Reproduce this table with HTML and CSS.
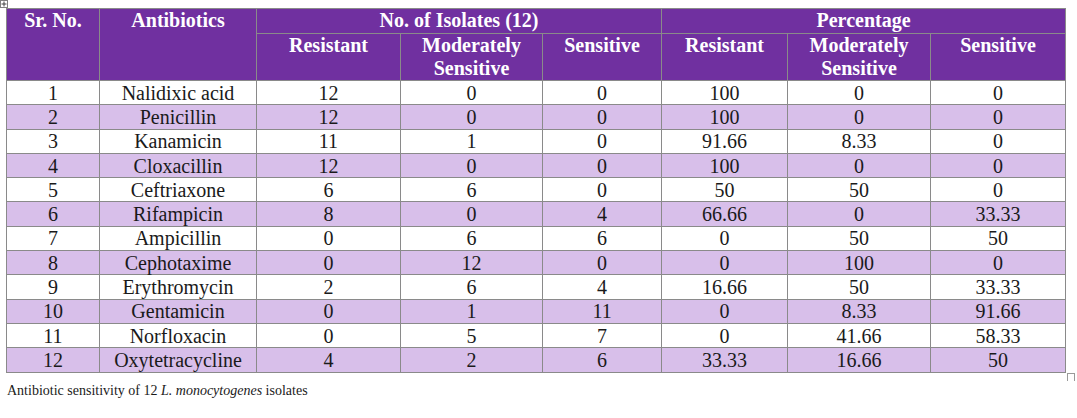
FILE: index.html
```html
<!DOCTYPE html>
<html>
<head>
<meta charset="utf-8">
<link rel="stylesheet" href="styles.css">
</head>
<body>
<div class="page">
  <div class="move-handle"><svg width="8" height="8" viewBox="0 0 8 8"><rect x="0.5" y="0.5" width="7" height="7" fill="#fff" stroke="#808080"/><path d="M4 1.5V6.5M1.5 4H6.5" stroke="#404040" stroke-width="1"/></svg></div>
  <table class="data">
    <colgroup>
      <col style="width:93px"><col style="width:157px"><col style="width:144px"><col style="width:142px"><col style="width:119px"><col style="width:126px"><col style="width:143px"><col style="width:135px">
    </colgroup>
    <thead>
      <tr class="h1">
        <th rowspan="2">Sr. No.</th>
        <th rowspan="2">Antibiotics</th>
        <th colspan="3">No. of Isolates (12)</th>
        <th colspan="3">Percentage</th>
      </tr>
      <tr class="h2">
        <th>Resistant</th>
        <th>Moderately<br>Sensitive</th>
        <th>Sensitive</th>
        <th>Resistant</th>
        <th>Moderately<br>Sensitive</th>
        <th>Sensitive</th>
      </tr>
    </thead>
    <tbody>
      <tr><td>1</td><td>Nalidixic acid</td><td>12</td><td>0</td><td>0</td><td>100</td><td>0</td><td>0</td></tr>
      <tr><td>2</td><td>Penicillin</td><td>12</td><td>0</td><td>0</td><td>100</td><td>0</td><td>0</td></tr>
      <tr><td>3</td><td>Kanamicin</td><td>11</td><td>1</td><td>0</td><td>91.66</td><td>8.33</td><td>0</td></tr>
      <tr><td>4</td><td>Cloxacillin</td><td>12</td><td>0</td><td>0</td><td>100</td><td>0</td><td>0</td></tr>
      <tr><td>5</td><td>Ceftriaxone</td><td>6</td><td>6</td><td>0</td><td>50</td><td>50</td><td>0</td></tr>
      <tr><td>6</td><td>Rifampicin</td><td>8</td><td>0</td><td>4</td><td>66.66</td><td>0</td><td>33.33</td></tr>
      <tr><td>7</td><td>Ampicillin</td><td>0</td><td>6</td><td>6</td><td>0</td><td>50</td><td>50</td></tr>
      <tr><td>8</td><td>Cephotaxime</td><td>0</td><td>12</td><td>0</td><td>0</td><td>100</td><td>0</td></tr>
      <tr><td>9</td><td>Erythromycin</td><td>2</td><td>6</td><td>4</td><td>16.66</td><td>50</td><td>33.33</td></tr>
      <tr><td>10</td><td>Gentamicin</td><td>0</td><td>1</td><td>11</td><td>0</td><td>8.33</td><td>91.66</td></tr>
      <tr><td>11</td><td>Norfloxacin</td><td>0</td><td>5</td><td>7</td><td>0</td><td>41.66</td><td>58.33</td></tr>
      <tr><td>12</td><td>Oxytetracycline</td><td>4</td><td>2</td><td>6</td><td>33.33</td><td>16.66</td><td>50</td></tr>
    </tbody>
  </table>
  <div class="resize-handle"></div>
  <p class="caption">Antibiotic sensitivity of 12 <em>L. monocytogenes</em> isolates</p>
</div>
</body>
</html>
```
FILE: styles.css
```css
html, body {
  margin: 0;
  padding: 0;
  background: #ffffff;
}
.page {
  position: relative;
  padding: 8px 0 0 6px;
  font-family: "Liberation Serif", "Times New Roman", serif;
  color: #1a1a1a;
}
.move-handle {
  position: absolute;
  left: 0;
  top: 0;
  width: 8px;
  height: 8px;
  line-height: 0;
}
.data {
  border-collapse: collapse;
  table-layout: fixed;
  width: 1060px;
  font-size: 20px;
}
.data th, .data td {
  border: 1px solid #8a8a8a;
  padding: 0;
  text-align: center;
}
.data th {
  background: #7030a0;
  color: #ffffff;
  font-weight: bold;
  vertical-align: top;
  line-height: 23px;
}
.data tr.h1 th {
  height: 24px;
}
.data tr.h2 th {
  height: 46px;
}
.data td {
  height: 23.3px;
  line-height: 22px;
  vertical-align: middle;
}
.data tbody tr:nth-child(even) td {
  background: #d8bfea;
}
.resize-handle {
  position: absolute;
  left: 1067px;
  top: 373px;
  width: 6px;
  height: 7px;
  border: 1px solid #9a9a9a;
  border-bottom: none;
}
.caption {
  margin: 9px 0 0 1px;
  font-size: 14px;
  line-height: 18px;
  color: #1a1a1a;
}
```
